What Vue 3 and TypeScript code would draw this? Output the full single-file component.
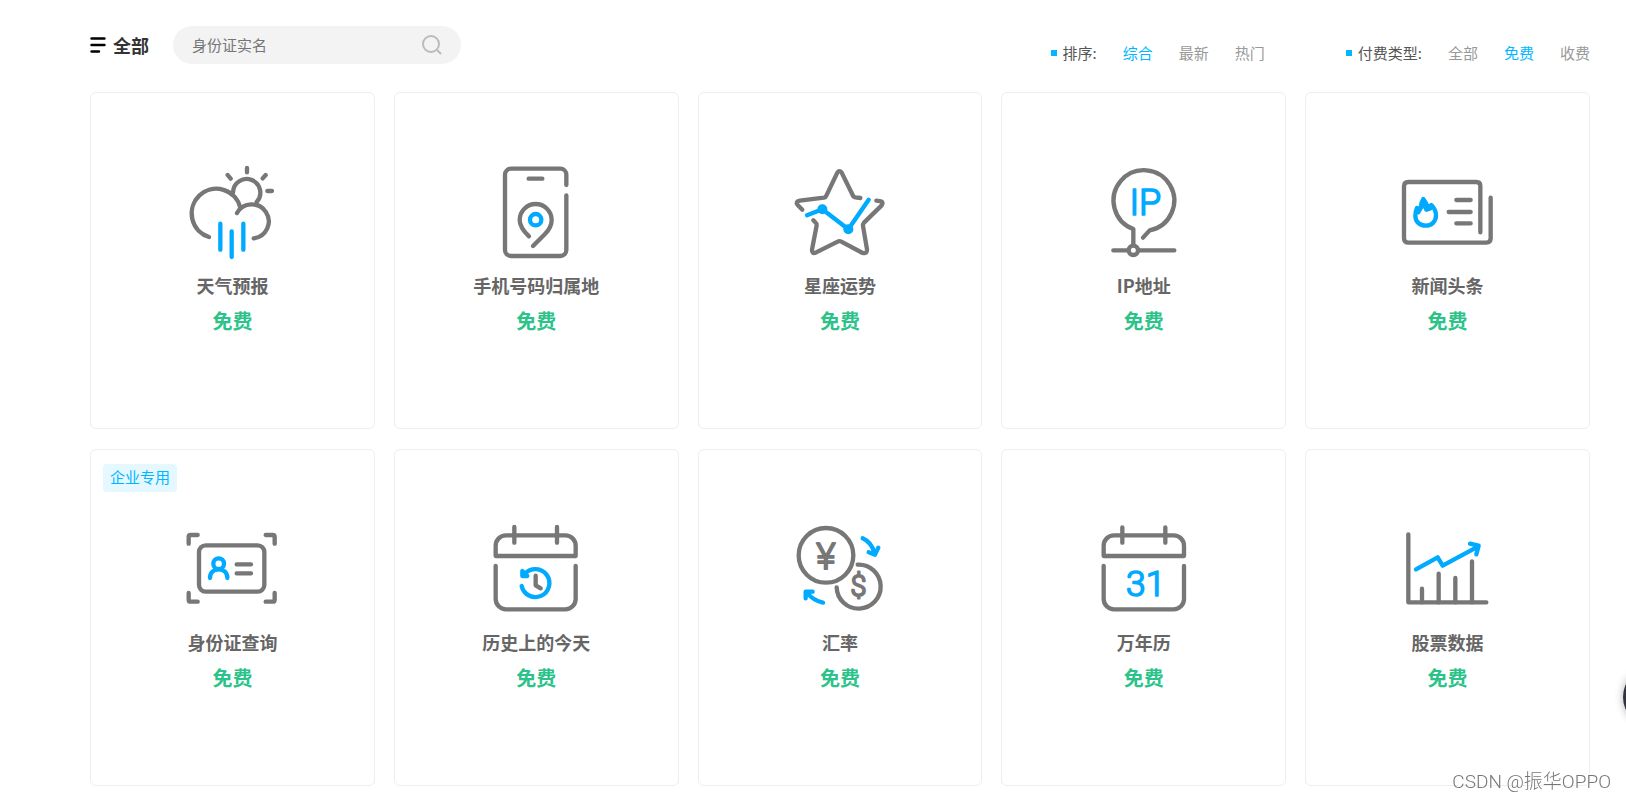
<script setup lang="ts">
import { ref } from 'vue'

interface Service {
  icon: string
  name: string
  price: string
  viewBox: string
  tag?: string
}

const keyword = ref('')
const sort = ref('综合')
const payment = ref('免费')

const sortOptions: string[] = ['综合', '最新', '热门']
const paymentOptions: string[] = ['全部', '免费', '收费']

const services: Service[] = [
  { icon: 'weather', name: '天气预报', price: '免费', viewBox: '7 21 300 300' },
  { icon: 'phone', name: '手机号码归属地', price: '免费', viewBox: '49 21 300 300' },
  { icon: 'star', name: '星座运势', price: '免费', viewBox: '15 21 300 300' },
  { icon: 'ip', name: 'IP地址', price: '免费', viewBox: '11 21 300 300' },
  { icon: 'news', name: '新闻头条', price: '免费', viewBox: '23 21 300 300' },
  { icon: 'identity', name: '身份证查询', price: '免费', viewBox: '307 327 300 300', tag: '企业专用' },
  { icon: 'history', name: '历史上的今天', price: '免费', viewBox: '19 27 300 300' },
  { icon: 'exchange', name: '汇率', price: '免费', viewBox: '15 12 300 300' },
  { icon: 'calendar', name: '万年历', price: '免费', viewBox: '11 12 300 300' },
  { icon: 'stock', name: '股票数据', price: '免费', viewBox: '23 12 300 300' },
]
</script>

<template>
  <main class="page">
    <header class="toolbar">
      <button class="all" type="button">
        <svg class="menu-icon" viewBox="0 0 16 16" aria-hidden="true">
          <path d="M1.5 1.5H14.5M1.5 8H14.5M1.5 14.5H9" />
        </svg>
        全部
      </button>
      <form class="search" role="search" @submit.prevent>
        <input v-model="keyword" type="text" placeholder="身份证实名" aria-label="搜索" />
        <button type="submit" aria-label="搜索">
          <svg viewBox="0 0 20 20" aria-hidden="true">
            <circle cx="9" cy="9" r="8" />
            <path d="M15 15L19 19" />
          </svg>
        </button>
      </form>
      <div class="filters">
        <div class="filter" role="group" aria-label="排序">
          <span class="filter-label">排序:</span>
          <button
            v-for="option in sortOptions"
            :key="option"
            type="button"
            :class="{ active: option === sort }"
            @click="sort = option"
          >{{ option }}</button>
        </div>
        <div class="filter" role="group" aria-label="付费类型">
          <span class="filter-label">付费类型:</span>
          <button
            v-for="option in paymentOptions"
            :key="option"
            type="button"
            :class="{ active: option === payment }"
            @click="payment = option"
          >{{ option }}</button>
        </div>
      </div>
    </header>

    <section class="grid">
      <a v-for="item in services" :key="item.name" class="card" href="#">
        <span v-if="item.tag" class="tag">{{ item.tag }}</span>
        <svg class="icon" :viewBox="item.viewBox" aria-hidden="true">
          <g v-if="item.icon === 'weather'">
            <path d="M88 246A74 74 0 1 1 182 158" />
            <path d="M172 174A51 51 0 1 1 222 250" />
            <path d="M160 112A41 41 0 1 1 231 141" />
            <path d="M202 39V52M144 60L153 71M258 60L249 70M263 108H277" />
            <path class="blue" d="M122 206V284M156 229V306M191 206V284" />
          </g>
          <g v-else-if="item.icon === 'phone'">
            <path d="M290 90V59a18 18 0 0 0-18-18H124a18 18 0 0 0-18 18V285a18 18 0 0 0 18 18H272a18 18 0 0 0 18-18V121" />
            <path d="M177 71H218" />
            <path d="M178 244C160 227 150 213 150 195A48 48 0 0 1 246 195C246 212 238 225 226 237L190 273" />
            <circle class="blue" cx="198" cy="194" r="17" />
          </g>
          <g v-else-if="item.icon === 'star'">
            <path d="M52 164L38 150Q30 139 44 137L117 128Q122 127 124 122L157 53Q163 44 170 53L203 120Q205 126 211 127L226 129" />
            <path d="M274 137L288 139Q296 142 290 151L237 203Q233 208 234 213L246 283Q247 297 233 294L169 260Q163 257 158 260L92 293Q80 297 81 284L95 211Q96 206 92 203L85 196" />
            <path class="blue" d="M66 181L112 163L190 223L251 134" />
            <circle class="dot" cx="112" cy="163" r="15" />
            <circle class="dot" cx="190" cy="223" r="15" />
          </g>
          <g v-else-if="item.icon === 'ip'">
            <path d="M129 267V222A91 91 0 1 1 178 226L158 248" />
            <path d="M69 286H110M148 286H252" />
            <circle cx="129" cy="286" r="14" />
            <text class="mark" x="165" y="179" font-size="108">IP</text>
          </g>
          <g v-else-if="item.icon === 'news'">
            <path d="M270 232V93q0-12-12-12H54q-13 0-13 13V249q0 14 14 14H288q13 0 13-13V128" />
            <path d="M198 135H241M175 171H241M198 205H241" />
            <path class="blue" d="M80 159Q86 168 91 159Q92 142 99 132Q107 142 114 160L123 150Q137 164 137 181C137 200 124 212 106 212S75 200 75 182Q75 170 80 159Z" />
            <path class="blue" d="M84 172L99 144L108 164L120 160" />
          </g>
          <g v-else-if="item.icon === 'identity'">
            <rect x="358" y="406" width="196" height="139" rx="20" />
            <path d="M327 401V381q0-6 6-6H354M558 375H579q6 0 6 6V401M327 549V569q0 6 6 6H354M558 575H579q6 0 6-6V549" />
            <path d="M471 463H514M471 490H514" />
            <circle class="blue" cx="417" cy="461" r="16" />
            <path class="blue" d="M391 504C391 488 402 478 417 478S443 488 443 504" />
          </g>
          <g v-else-if="item.icon === 'history'">
            <path d="M48 138V107a31 31 0 0 1 31-31H257a31 31 0 0 1 31 31V138Z" />
            <path d="M104 51V98M232 51V98" />
            <path d="M48 168V267a31 31 0 0 0 31 31H257a31 31 0 0 0 31-31V168" />
            <path d="M168 197V226L183 235" />
            <path class="blue" d="M126 228A42 42 0 1 0 136 191" />
            <path class="blue" d="M128 183V198H143Z" />
          </g>
          <g v-else-if="item.icon === 'exchange'">
            <circle cx="123" cy="121" r="82" />
            <path d="M155 217A66 66 0 1 0 218 149" />
            <text class="coin" x="123" y="162" font-size="112">¥</text>
            <text class="coin" x="220" y="244" font-size="86">$</text>
            <path class="blue" d="M233 70Q260 82 268 114M251 112L270 119L280 98" />
            <path class="blue" d="M114 263Q84 256 67 234M62 250V230H83" />
          </g>
          <g v-else-if="item.icon === 'calendar'">
            <path d="M40 123V92a31 31 0 0 1 31-31H250a31 31 0 0 1 31 31V123Z" />
            <path d="M96 37V83M225 37V83" />
            <path d="M40 153V252a31 31 0 0 0 31 31H250a31 31 0 0 0 31-31V153" />
            <text class="mark" x="166" y="242" font-size="106">31</text>
          </g>
          <g v-else>
            <path d="M54 58V262H288" />
            <path d="M95 221V262M145 176V262M195 189V262M245 139V262" />
            <path class="blue" d="M77 163L142 127L157 152L264 94M239 86L265 92L258 118" />
          </g>
        </svg>
        <h2>{{ item.name }}</h2>
        <p>{{ item.price }}</p>
      </a>
    </section>

    <button class="floating" type="button" aria-label="客服"></button>
    <div class="watermark">CSDN @振华OPPO</div>
  </main>
</template>

<style>
body {
  background: #fff;
  overflow: hidden;
}
</style>

<style scoped>
.page {
  box-sizing: border-box;
  padding: 26px 36px 14px 90px;
  font-family: "Noto Sans CJK SC", sans-serif;
  color: #666;
}

button {
  padding: 0;
  border: 0;
  background: none;
  font: inherit;
  color: inherit;
  cursor: pointer;
}

.toolbar {
  display: flex;
  align-items: center;
  height: 38px;
  margin-bottom: 28px;
}

.all {
  display: flex;
  align-items: center;
  gap: 7px;
  font-size: 18px;
  line-height: 26px;
  font-weight: 700;
  color: #333;
}

.menu-icon {
  width: 16px;
  height: 16px;
  fill: none;
  stroke: #000;
  stroke-width: 2.4;
  stroke-linecap: round;
}

.search {
  display: flex;
  align-items: center;
  box-sizing: border-box;
  width: 288px;
  height: 38px;
  margin-left: 24px;
  padding: 0 19px;
  border-radius: 19px;
  background: #f3f3f3;
}

.search input {
  flex: 1;
  min-width: 0;
  padding: 0;
  border: 0;
  outline: 0;
  background: none;
  font: inherit;
  font-size: 15px;
  line-height: 22px;
  color: #666;
}

.search input::placeholder {
  color: #757575;
  opacity: 1;
}

.search button {
  display: flex;
}

.search svg {
  width: 20px;
  height: 20px;
  fill: none;
  stroke: #bbb;
  stroke-width: 2;
}

.filters {
  display: flex;
  gap: 81px;
  margin-left: auto;
  padding-top: 16px;
  font-size: 15px;
  line-height: 22px;
}

.filter {
  display: flex;
  gap: 26px;
  color: #999;
}

.filter-label {
  display: flex;
  align-items: center;
  gap: 6px;
  color: #555;
}

.filter-label::before {
  content: "";
  width: 6px;
  height: 6px;
  background: #00b7ff;
}

.filter .active {
  color: #00b7ff;
}

.grid {
  display: grid;
  grid-template-columns: repeat(5, 1fr);
  gap: 20px 19px;
}

.card {
  position: relative;
  display: flex;
  flex-direction: column;
  align-items: center;
  padding: 69px 0 92px;
  border: 1px solid #eee;
  border-radius: 6px;
  color: #666;
  text-decoration: none;
}

.tag {
  position: absolute;
  top: 14px;
  left: 12px;
  padding: 0 7px 2px;
  border-radius: 4px;
  background: #e5f7ff;
  font-size: 15px;
  line-height: 26px;
  color: #00b7ff;
}

.icon {
  width: 100px;
  height: 100px;
  fill: none;
  stroke: #777;
  stroke-width: 13;
  stroke-linecap: round;
  stroke-linejoin: round;
}

.icon .blue {
  stroke: #00aaff;
}

.icon .dot {
  fill: #00aaff;
  stroke: none;
}

.icon text {
  font-family: Roboto, sans-serif;
  font-weight: 300;
  text-anchor: middle;
}

.icon .mark {
  fill: #00aaff;
  stroke: #00aaff;
  stroke-width: 5;
}

.icon .coin {
  fill: #777;
  stroke: #777;
  stroke-width: 6;
}

h2 {
  margin: 10px 0 8px;
  font-size: 18px;
  line-height: 26px;
  font-weight: 700;
}

p {
  margin: 0;
  font-size: 20px;
  line-height: 30px;
  font-weight: 700;
  color: #2bc389;
}

.floating {
  position: fixed;
  right: -57px;
  bottom: 74px;
  width: 60px;
  height: 60px;
  border-radius: 50%;
  background: #33333f;
  box-shadow: 0 0 8px rgba(0, 0, 0, 0.3);
}

.watermark {
  position: fixed;
  right: 15px;
  bottom: 5px;
  font-family: Roboto, "Noto Sans CJK SC", sans-serif;
  font-size: 19px;
  line-height: 28px;
  font-weight: 300;
  color: #777;
  text-shadow: -1px -1px 0 #fff;
}
</style>
